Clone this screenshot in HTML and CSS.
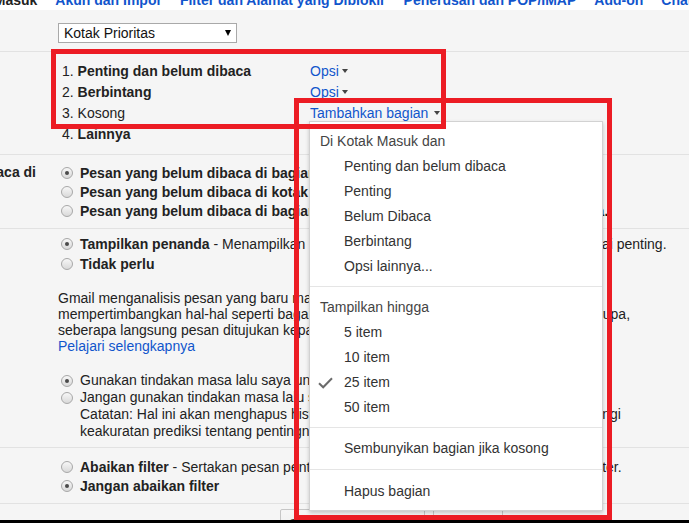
FILE: index.html
```html
<!DOCTYPE html>
<html lang="id">
<head>
<meta charset="utf-8">
<title>Setelan Kotak Masuk</title>
<link rel="stylesheet" href="styles.css">
</head>
<body>
<div class="frame">
  <nav class="tabs">
    <div class="tabrow">
      <span class="tab cur">Kotak Masuk</span>
      <span class="tab">Akun dan Impor</span>
      <span class="tab">Filter dan Alamat yang Diblokir</span>
      <span class="tab">Penerusan dan POP/IMAP</span>
      <span class="tab">Add-on</span>
      <span class="tab">Chat</span>
    </div>
  </nav>

  <section class="sec sec-select">
    <div class="select"><span>Kotak Prioritas</span><span class="caret"></span></div>
  </section>

  <section class="sec sec-list">
    <div>1. <b>Penting dan belum dibaca</b></div><div><a class="link">Opsi</a><span class="dd"></span></div>
    <div>2. <b>Berbintang</b></div><div><a class="link">Opsi</a><span class="dd"></span></div>
    <div>3. Kosong</div><div><a class="link">Tambahkan bagian</a><span class="dd wide"></span></div>
    <div>4. <b>Lainnya</b></div><div></div>
  </section>

  <section class="sec sec-a setting">
    <div class="label"><span>Jumlah belum dibaca di</span></div>
    <div>
      <div class="opt"><span class="radio on"></span><b>Pesan yang belum dibaca di bagian pertama saja</b></div>
      <div class="opt"><span class="radio"></span><b>Pesan yang belum dibaca di kotak masuk prioritas</b></div>
      <div class="opt"><span class="radio"></span><b>Pesan yang belum dibaca di bagian pertama dan kotak masuk prioritas lainnya.</b></div>
    </div>
  </section>

  <section class="sec sec-b setting">
    <div class="label"></div>
    <div>
      <div class="opt h20"><span class="radio on"></span><span><b>Tampilkan penanda</b> - Menampilkan penanda di samping email yang ditandai sebagai penting.</span></div>
      <div class="opt h20"><span class="radio"></span><b>Tidak perlu</b></div>
      <p class="para">Gmail menganalisis pesan yang baru masuk untuk memprediksi apa yang penting,<br>mempertimbangkan hal-hal seperti bagaimana Anda pernah menangani pesan yang serupa,<br>seberapa langsung pesan ditujukan kepada Anda, dan banyak lagi.<br><a class="link">Pelajari selengkapnya</a></p>
      <div class="opts2">
        <div class="opt h17"><span class="radio on"></span>Gunakan tindakan masa lalu saya untuk memprediksi pesan mana yang penting.</div>
        <div class="opt h17"><span class="radio"></span>Jangan gunakan tindakan masa lalu saya untuk memprediksi pesan penting.</div>
        <div class="cont">Catatan: Hal ini akan menghapus histori tindakan Anda, dan mungkin akan mengurangi</div>
        <div class="cont">keakuratan prediksi tentang pentingnya pesan.</div>
      </div>
    </div>
  </section>

  <section class="sec sec-c setting">
    <div class="label"></div>
    <div>
      <div class="opt"><span class="radio"></span><span><b>Abaikan filter</b> - Sertakan pesan penting di Kotak Masuk yang disaring keluar oleh filter.</span></div>
      <div class="opt"><span class="radio on"></span><b>Jangan abaikan filter</b></div>
    </div>
  </section>

  <div class="actions">
    <button class="btn" type="button">Simpan Perubahan</button>
    <button class="btn pad" type="button">Batal</button>
  </div>
</div>
<div class="edge"></div>

<div class="menu">
  <div class="mgroup">
    <div class="mhead">Di Kotak Masuk dan</div>
    <div class="mitem"><span class="gutter"></span>Penting dan belum dibaca</div>
    <div class="mitem"><span class="gutter"></span>Penting</div>
    <div class="mitem"><span class="gutter"></span>Belum Dibaca</div>
    <div class="mitem"><span class="gutter"></span>Berbintang</div>
    <div class="mitem"><span class="gutter"></span>Opsi lainnya...</div>
  </div>
  <div class="mgroup">
    <div class="mhead">Tampilkan hingga</div>
    <div class="mitem"><span class="gutter"></span>5 item</div>
    <div class="mitem"><span class="gutter"></span>10 item</div>
    <div class="mitem"><span class="gutter"><svg class="check" width="15" height="12" viewBox="0 0 15 12"><path d="M1 6.2 L5.2 10.3 L14 1.2" fill="none" stroke="#6b6b6b" stroke-width="2"/></svg></span>25 item</div>
    <div class="mitem"><span class="gutter"></span>50 item</div>
  </div>
  <div class="mgroup g3">
    <div class="mitem"><span class="gutter"></span>Sembunyikan bagian jika kosong</div>
  </div>
  <div class="mgroup g4">
    <div class="mitem"><span class="gutter"></span>Hapus bagian</div>
  </div>
</div>

<div class="mark mark1"></div>
<div class="mark mark2"></div>
</body>
</html>
```

FILE: styles.css
```css
* { box-sizing: border-box; }
html, body { margin: 0; }
body {
  width: 689px;
  height: 523px;
  overflow: hidden;
  position: relative;
  background: #f5f5f5;
  font-family: "Liberation Sans", Arial, sans-serif;
  font-size: 14px;
  color: #222;
}
.frame { height: 520px; overflow: hidden; white-space: nowrap; }
.edge { height: 3px; background: #000; }

.tabs { height: 10px; overflow: hidden; background: #fff; }
.tabrow {
  display: flex;
  gap: 18px;
  margin: -7px 0 0 -49px;
  line-height: 14px;
  font-weight: bold;
}
.tab { color: #15c; }
.tab.cur { color: #222; }

.sec { border-bottom: 1px solid #e2e2e2; }

.sec-select { height: 42px; padding: 13px 0 0 58px; }
.select {
  width: 179px;
  height: 20px;
  border: 1px solid #a9a9a9;
  background: #fff;
  display: flex;
  align-items: center;
  padding: 0 5px;
  color: #111;
}
.caret {
  margin-left: auto;
  width: 0; height: 0;
  border-left: 3.5px solid transparent;
  border-right: 3.5px solid transparent;
  border-top: 6px solid #000;
}

.sec-list {
  padding: 9px 0 9px 62px;
  display: grid;
  grid-template-columns: 248px auto;
  justify-content: start;
  line-height: 21px;
}
.link { color: #15c; text-decoration: none; }
.dd {
  display: inline-block;
  vertical-align: middle;
  margin: -2px 0 0 3px;
  width: 0; height: 0;
  border-left: 3.5px solid transparent;
  border-right: 3.5px solid transparent;
  border-top: 4px solid #444;
}
.dd.wide { margin-left: 6px; }

.setting { display: grid; grid-template-columns: 36px 1fr; column-gap: 22px; }
.label {
  font-weight: bold;
  display: flex;
  justify-content: flex-end;
  overflow: hidden;
  line-height: 19px;
}
.sec-a { padding: 8px 0; }
.sec-b { padding: 5px 0 7px; }
.sec-c { padding: 9px 0 8px; }

.opt { display: flex; align-items: center; gap: 7px; height: 19px; }
.opt.h20 { height: 20px; }
.opt.h17 { height: 17px; }
.radio {
  flex: none;
  width: 12px; height: 12px;
  margin-left: 3px;
  border-radius: 50%;
  border: 1px solid #a8a8a8;
  background: linear-gradient(#f7f7f7, #d9d9d9);
  display: flex;
  align-items: center;
  justify-content: center;
}
.radio.on::after {
  content: "";
  width: 4px; height: 4px;
  border-radius: 50%;
  background: #4a4a4a;
}
.para { margin: 16px 0 0; line-height: 16px; }
.opts2 { margin-top: 18px; line-height: 17px; }
.cont { padding-left: 22px; height: 17px; }

.actions { display: flex; gap: 8px; padding: 5px 0 0 280px; }
.btn {
  height: 27px;
  padding: 3px 8px 0;
  border: 1px solid #c6c6c6;
  border-radius: 2px;
  background: linear-gradient(#f6f6f6, #ededed);
  font-family: inherit;
  font-size: 14px;
  font-weight: bold;
  line-height: 18px;
  color: #444;
  align-self: flex-start;
  text-align: left;
}
.btn.pad { padding: 3px 17px 0; }

.menu {
  position: absolute;
  left: 309px;
  top: 121px;
  width: 294px;
  background: #fff;
  border: 1px solid #d2d2d2;
  box-shadow: 0 2px 4px rgba(0, 0, 0, 0.2);
  color: #333;
  white-space: nowrap;
}
.mgroup { padding: 8px 0 7px; border-top: 1px solid #e5e5e5; }
.mgroup:first-child { padding-top: 7px; border-top: 0; }
.mgroup.g3 { padding: 8px 0 8px; }
.mgroup.g4 { padding: 9px 0 6px; }
.mhead { height: 25px; line-height: 25px; padding-left: 10px; color: #444; }
.mitem { height: 25px; line-height: 25px; display: flex; align-items: center; }
.gutter { flex: none; width: 34px; padding-left: 8px; display: flex; align-items: center; }

.mark {
  position: absolute;
  border: 5px solid #ec1c24;
  z-index: 5;
}
.mark1 { left: 51px; top: 49px; width: 395px; height: 80px; }
.mark2 { left: 294px; top: 98px; width: 318px; height: 422px; }
```
